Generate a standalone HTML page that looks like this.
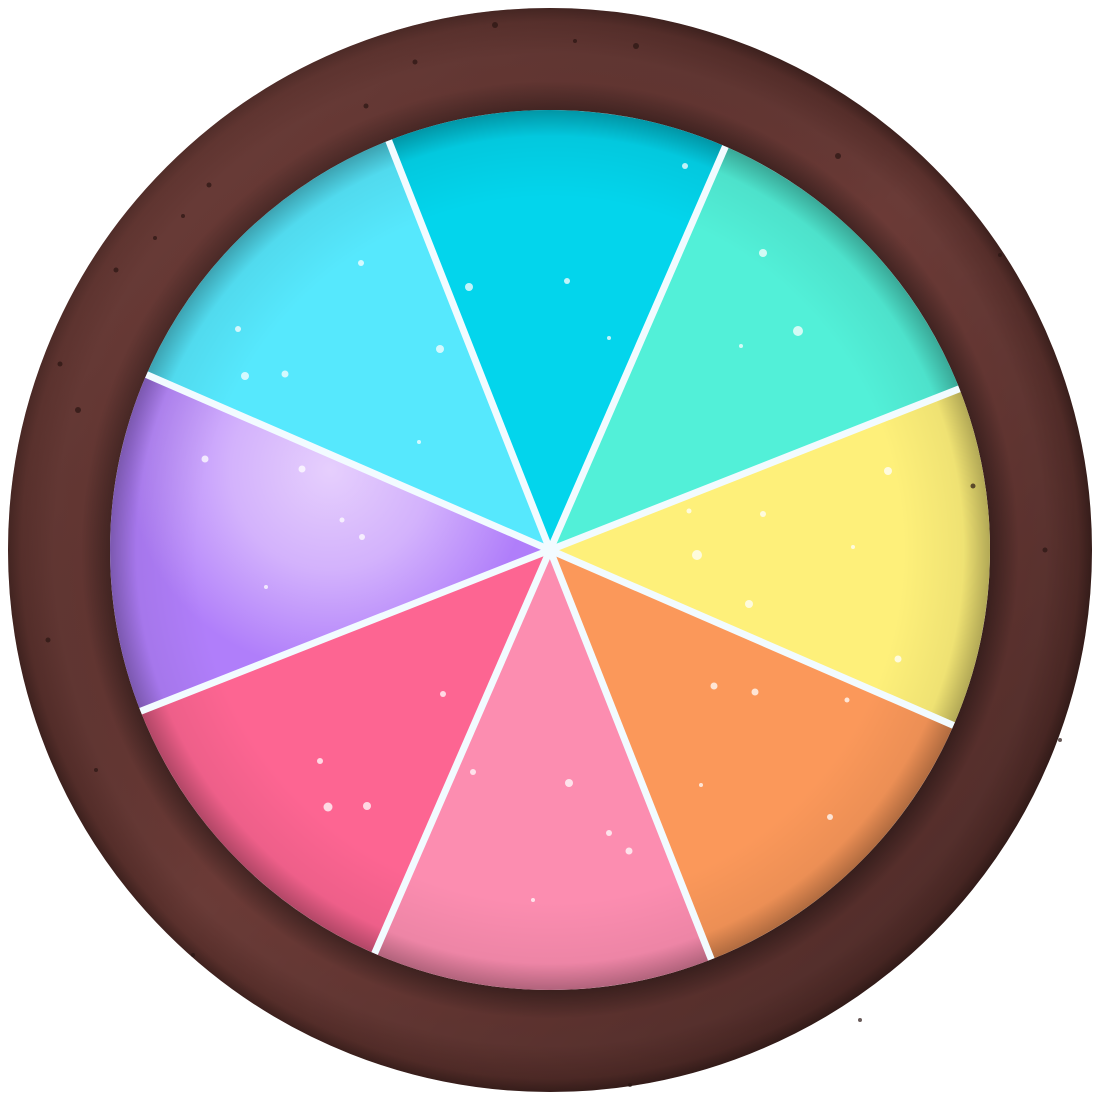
<!DOCTYPE html>
<html><head><meta charset="utf-8"><style>html,body{margin:0;padding:0;background:#fff}svg{display:block}</style></head>
<body>
<svg width="1100" height="1100" viewBox="0 0 1100 1100" xmlns="http://www.w3.org/2000/svg">
<defs>
<radialGradient id="ring" cx="550" cy="550" r="545" gradientUnits="userSpaceOnUse">
<stop offset="0.80" stop-color="#3e2220"/>
<stop offset="0.86" stop-color="#6b3a36"/>
<stop offset="0.91" stop-color="#6a3b37"/>
<stop offset="0.97" stop-color="#5a302c"/>
<stop offset="1" stop-color="#3a1f1c"/>
</radialGradient>
<linearGradient id="ringlight" x1="0" y1="0" x2="1" y2="1">
<stop offset="0" stop-color="#8a504a" stop-opacity="0.5"/>
<stop offset="0.5" stop-color="#000" stop-opacity="0"/>
<stop offset="1" stop-color="#000" stop-opacity="0.3"/>
</linearGradient>
<radialGradient id="inner" cx="550" cy="550" r="440" gradientUnits="userSpaceOnUse">
<stop offset="0.8" stop-color="#000" stop-opacity="0"/>
<stop offset="0.94" stop-color="#000" stop-opacity="0.06"/>
<stop offset="1" stop-color="#000" stop-opacity="0.3"/>
</radialGradient>
<radialGradient id="purp" cx="330" cy="470" r="200" gradientUnits="userSpaceOnUse">
<stop offset="0" stop-color="#e6cffd"/>
<stop offset="0.5" stop-color="#d3b2fc"/>
<stop offset="1" stop-color="#b07efa"/>
</radialGradient>
</defs>
<circle cx="550" cy="550" r="491" fill="none" stroke="url(#ring)" stroke-width="102"/>
<circle cx="550" cy="550" r="491" fill="none" stroke="url(#ringlight)" stroke-width="102"/>
<g>
<path d="M550,550 L388.7,140.6 A440,440 0 0 1 725.4,146.5 Z" fill="#03d5ec"/>
<path d="M550,550 L725.4,146.5 A440,440 0 0 1 959.4,388.7 Z" fill="#52f0d8"/>
<path d="M550,550 L959.4,388.7 A440,440 0 0 1 953.5,725.4 Z" fill="#fef07a"/>
<path d="M550,550 L953.5,725.4 A440,440 0 0 1 711.3,959.4 Z" fill="#fb985a"/>
<path d="M550,550 L711.3,959.4 A440,440 0 0 1 374.6,953.5 Z" fill="#fc8db0"/>
<path d="M550,550 L374.6,953.5 A440,440 0 0 1 140.6,711.3 Z" fill="#fd6592"/>
<path d="M550,550 L140.6,711.3 A440,440 0 0 1 146.5,374.6 Z" fill="url(#purp)"/>
<path d="M550,550 L146.5,374.6 A440,440 0 0 1 388.7,140.6 Z" fill="#56e8fd"/>
</g>
<circle cx="550" cy="550" r="440" fill="url(#inner)"/>
<g stroke="#f2fbff" stroke-width="7" stroke-linecap="butt">
<line x1="550" y1="550" x2="388.7" y2="140.6"/>
<line x1="550" y1="550" x2="725.4" y2="146.5"/>
<line x1="550" y1="550" x2="959.4" y2="388.7"/>
<line x1="550" y1="550" x2="953.5" y2="725.4"/>
<line x1="550" y1="550" x2="711.3" y2="959.4"/>
<line x1="550" y1="550" x2="374.6" y2="953.5"/>
<line x1="550" y1="550" x2="140.6" y2="711.3"/>
<line x1="550" y1="550" x2="146.5" y2="374.6"/>
</g>
<g fill="#fff" opacity="0.75">
<circle cx="205" cy="459" r="3.5"/><circle cx="302" cy="469" r="3.5"/><circle cx="342" cy="520" r="2.5"/><circle cx="362" cy="537" r="3"/><circle cx="266" cy="587" r="2"/>
<circle cx="361" cy="263" r="3"/><circle cx="238" cy="329" r="3"/><circle cx="245" cy="376" r="4"/><circle cx="285" cy="374" r="3.5"/><circle cx="440" cy="349" r="4"/><circle cx="419" cy="442" r="2"/>
<circle cx="763" cy="253" r="4"/><circle cx="798" cy="331" r="5"/><circle cx="741" cy="346" r="2"/>
<circle cx="888" cy="471" r="4"/><circle cx="763" cy="514" r="3"/><circle cx="697" cy="555" r="5"/><circle cx="749" cy="604" r="4"/><circle cx="853" cy="547" r="2"/><circle cx="898" cy="659" r="3.5"/><circle cx="689" cy="511" r="2.5"/>
<circle cx="714" cy="686" r="3.5"/><circle cx="755" cy="692" r="3.5"/><circle cx="847" cy="700" r="2.5"/><circle cx="701" cy="785" r="2"/><circle cx="830" cy="817" r="3"/>
<circle cx="569" cy="783" r="4"/><circle cx="473" cy="772" r="3"/><circle cx="609" cy="833" r="3"/><circle cx="629" cy="851" r="3.5"/><circle cx="533" cy="900" r="2"/>
<circle cx="443" cy="694" r="3"/><circle cx="320" cy="761" r="3"/><circle cx="328" cy="807" r="4.5"/><circle cx="367" cy="806" r="4"/>
<circle cx="685" cy="166" r="3"/><circle cx="567" cy="281" r="3"/><circle cx="469" cy="287" r="4"/><circle cx="609" cy="338" r="2"/>
</g>
<g fill="#2a1512" opacity="0.7">
<circle cx="495" cy="25" r="3"/><circle cx="415" cy="62" r="2.5"/><circle cx="636" cy="46" r="3"/><circle cx="575" cy="41" r="2"/><circle cx="838" cy="156" r="3"/><circle cx="209" cy="185" r="2.5"/><circle cx="116" cy="270" r="2.5"/><circle cx="78" cy="410" r="3"/><circle cx="48" cy="640" r="2.5"/><circle cx="96" cy="770" r="2"/><circle cx="193" cy="955" r="2"/><circle cx="1045" cy="550" r="2.5"/><circle cx="973" cy="486" r="2.5"/><circle cx="1000" cy="255" r="2"/><circle cx="1060" cy="740" r="2"/><circle cx="860" cy="1020" r="2"/><circle cx="630" cy="1085" r="2"/><circle cx="366" cy="106" r="2.5"/><circle cx="183" cy="216" r="2"/><circle cx="155" cy="238" r="2"/><circle cx="60" cy="364" r="2.5"/>
</g>
</svg>
</body></html>
